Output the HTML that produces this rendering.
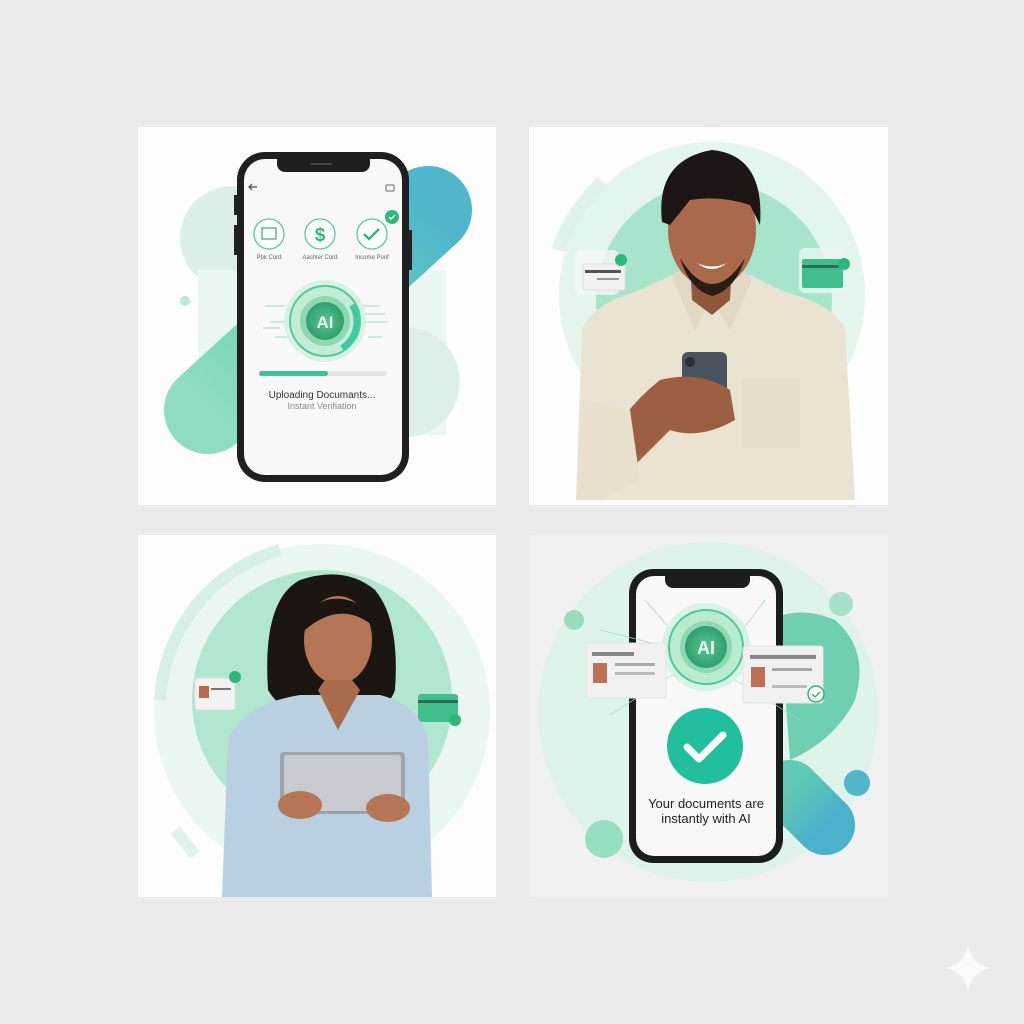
<!DOCTYPE html>
<html><head><meta charset="utf-8"><style>
html,body{margin:0;padding:0;background:#ebebeb;}
svg{display:block}
text{font-family:"Liberation Sans",sans-serif}
</style></head><body>
<svg width="1024" height="1024" viewBox="0 0 1024 1024" xmlns="http://www.w3.org/2000/svg">
<defs>
<linearGradient id="tg" x1="1" y1="0" x2="0" y2="1"><stop offset="0" stop-color="#4fb6cc"/><stop offset="0.5" stop-color="#6bd0b6"/><stop offset="1" stop-color="#8fddc0"/></linearGradient>
<linearGradient id="tg2" x1="0" y1="0" x2="1" y2="1"><stop offset="0" stop-color="#5ec9b4"/><stop offset="1" stop-color="#4ab2cc"/></linearGradient>
<radialGradient id="ai"><stop offset="0" stop-color="#5cc592"/><stop offset="1" stop-color="#2f9e6d"/></radialGradient>
<clipPath id="c1"><rect x="138" y="127" width="358" height="378"/></clipPath>
<clipPath id="c2"><rect x="529" y="127" width="359" height="378"/></clipPath>
<clipPath id="c3"><rect x="138" y="535" width="358" height="362"/></clipPath>
<clipPath id="c4"><rect x="529" y="535" width="359" height="362"/></clipPath>
</defs>
<rect width="1024" height="1024" fill="#ebebeb"/>

<!-- Panel 1 -->
<g clip-path="url(#c1)">
<rect x="138" y="127" width="358" height="378" fill="#fdfdfd"/>
<circle cx="232" cy="238" r="52" fill="#dcefe7"/>
<rect x="198" y="270" width="248" height="165" fill="#eaf6f0"/>
<circle cx="405" cy="382" r="55" fill="#deefe9"/>
<line x1="428" y1="210" x2="208" y2="410" stroke="url(#tg)" stroke-width="88" stroke-linecap="round"/>
<circle cx="185" cy="301" r="5" fill="#bde8d6"/>
<rect x="237" y="152" width="172" height="330" rx="28" fill="#1f1f1f"/>
<rect x="234" y="195" width="4" height="20" fill="#222"/><rect x="234" y="225" width="4" height="30" fill="#222"/><rect x="408" y="230" width="4" height="40" fill="#222"/>
<rect x="244" y="159" width="158" height="316" rx="21" fill="#f8f8f8"/>
<path d="M277 158h93v6a8 8 0 0 1-8 8h-77a8 8 0 0 1-8-8z" fill="#1f1f1f"/>
<rect x="310" y="163" width="22" height="2" rx="1" fill="#444"/>
<path d="M257 187h-8m3-3l-3 3 3 3" stroke="#444" stroke-width="1.2" fill="none"/>
<rect x="386" y="185" width="8" height="6" rx="1" stroke="#666" fill="none" stroke-width="1"/>
<circle cx="392" cy="217" r="7" fill="#2eb77b"/><path d="M389 217l2 2 4-4" stroke="#fff" stroke-width="1.4" fill="none"/>
<g fill="#fff" stroke="#4fcf98" stroke-width="1.3">
<circle cx="269" cy="234" r="15"/><circle cx="320" cy="234" r="15"/><circle cx="372" cy="234" r="15"/></g>
<rect x="262" y="228" width="14" height="11" fill="none" stroke="#3db585" stroke-width="1.3"/>
<text x="320" y="241" font-size="19" font-weight="bold" fill="#2eb77b" text-anchor="middle">$</text>
<path d="M364 234l5 5 10-10" stroke="#2eb77b" stroke-width="2.5" fill="none"/>
<g font-size="6" fill="#666" text-anchor="middle"><text x="269" y="259">Pbk Cord</text><text x="320" y="259">Aashler Cord</text><text x="372" y="259">Income Poof</text></g>
<g stroke="#9adcbf" stroke-width="1"><line x1="265" y1="306" x2="285" y2="306"/><line x1="270" y1="322" x2="292" y2="322"/><line x1="263" y1="328" x2="280" y2="328"/><line x1="275" y1="337" x2="290" y2="337"/><line x1="360" y1="306" x2="380" y2="306"/><line x1="362" y1="314" x2="385" y2="314"/><line x1="360" y1="322" x2="388" y2="322"/><line x1="368" y1="337" x2="382" y2="337"/></g>
<circle cx="325" cy="321" r="41" fill="#d8f3e6"/>
<circle cx="325" cy="321" r="35" fill="#c3ecd8" stroke="#55c99a" stroke-width="2"/>
<path d="M352 305a32 32 0 0 1 0 33a32 32 0 0 1-10 10" stroke="#3dc9a4" stroke-width="6" fill="none"/>
<circle cx="325" cy="321" r="25" fill="#8fd6b3"/>
<circle cx="325" cy="321" r="19" fill="url(#ai)"/>
<text x="325" y="328" font-size="17" font-weight="bold" fill="#eafaf1" text-anchor="middle">AI</text>
<rect x="259" y="371" width="128" height="5" rx="2.5" fill="#e4e4e4"/>
<rect x="259" y="371" width="69" height="5" rx="2.5" fill="#3dc39a"/>
<text x="322" y="398" font-size="10" fill="#333" text-anchor="middle">Uploading Documants...</text>
<text x="322" y="409" font-size="9" fill="#888" text-anchor="middle">Instant Verifiation</text>
</g>

<!-- Panel 2 -->
<g clip-path="url(#c2)">
<rect x="529" y="127" width="359" height="378" fill="#fdfdfd"/>
<circle cx="712" cy="295" r="153" fill="#e4f5ee"/>
<path d="M558 250a170 170 0 0 1 45-68" stroke="#e0f3eb" stroke-width="14" fill="none"/>
<circle cx="714" cy="300" r="118" fill="#a8e4cb"/>
<rect x="575" y="250" width="44" height="45" rx="6" fill="#f2f8f5" opacity="0.8"/>
<rect x="583" y="264" width="42" height="26" rx="2" fill="#f2f2f2" stroke="#ddd"/>
<rect x="585" y="270" width="36" height="3" fill="#555"/><rect x="597" y="278" width="22" height="2" fill="#999"/>
<circle cx="621" cy="260" r="6" fill="#2eb77b"/>
<rect x="799" y="248" width="46" height="45" rx="6" fill="#eaf6f0" opacity="0.8"/>
<rect x="802" y="259" width="41" height="29" rx="2" fill="#3ebf8c"/><rect x="802" y="265" width="41" height="3" fill="#2f6b55"/>
<circle cx="844" cy="264" r="6" fill="#2eb77b"/>
<!-- body -->
<path d="M576 500 L582 330 Q590 305 640 290 L672 275 L750 275 L785 292 Q835 305 845 330 L855 500 Z" fill="#ebe3d1"/>
<path d="M672 278 L695 330 L712 300 L730 330 L752 280 L745 272 L675 272Z" fill="#e2d8c4"/>
<rect x="742" y="378" width="58" height="70" fill="#e4dbc8"/>
<path d="M690 260 L732 260 L730 300 L712 315 L692 300Z" fill="#8f573c"/>
<ellipse cx="712" cy="230" rx="44" ry="58" fill="#a9694a"/>
<path d="M662 222 Q655 160 712 150 Q765 155 760 225 L750 205 Q720 195 690 200 L670 225Z" fill="#1c1714"/>
<path d="M680 258 Q712 310 745 258 Q735 290 712 296 Q690 290 680 258Z" fill="#2a1c16"/>
<path d="M697 263 Q712 275 727 263 Q712 270 697 263Z" fill="#fff"/>
<rect x="682" y="352" width="45" height="72" rx="6" fill="#4a5360"/>
<circle cx="690" cy="362" r="5" fill="#2a2f36"/>
<path d="M660 380 Q700 370 730 390 L735 420 Q700 440 670 430 L630 470 Q600 500 600 470 Q610 420 660 380Z" fill="#9c5f42"/>
<path d="M576 500 L582 400 L630 410 L640 480 L600 500Z" fill="#e8e0cd"/>
</g>

<!-- Panel 3 -->
<g clip-path="url(#c3)">
<rect x="138" y="535" width="358" height="362" fill="#fdfdfd"/>
<circle cx="322" cy="712" r="168" fill="#eaf7f1"/>
<path d="M160 700a165 165 0 0 1 120-150" stroke="#d7f0e5" stroke-width="12" fill="none"/>
<circle cx="322" cy="700" r="130" fill="#b2e7cf"/>
<path d="M175 830l20 25" stroke="#e0f3eb" stroke-width="12"/>
<rect x="195" y="678" width="40" height="32" rx="3" fill="#f2f2f2" stroke="#ddd"/><rect x="199" y="686" width="10" height="12" fill="#b86a4e"/><rect x="211" y="688" width="20" height="2" fill="#777"/>
<circle cx="235" cy="677" r="6" fill="#2eb77b"/>
<rect x="418" y="694" width="40" height="28" rx="3" fill="#3ebf8c"/><rect x="418" y="700" width="40" height="3" fill="#2f6b55"/>
<circle cx="455" cy="720" r="6" fill="#2eb77b"/>
<path d="M268 690 Q262 600 300 580 Q345 565 375 590 Q400 620 395 690 Q385 720 330 710 Q285 720 268 690Z" fill="#1c1613"/>
<ellipse cx="338" cy="640" rx="34" ry="44" fill="#b57656"/>
<path d="M305 615 Q330 585 370 610 L372 625 Q340 600 305 630Z" fill="#1c1613"/>
<path d="M222 897 L228 740 Q240 705 300 695 L380 695 Q420 705 428 740 L432 897Z" fill="#b9cfe2"/>
<path d="M318 690 L338 730 L360 690 L352 680 L325 680Z" fill="#aa6b4c"/>
<rect x="280" y="752" width="125" height="62" rx="4" fill="#9ea3a8"/>
<rect x="284" y="755" width="117" height="56" rx="3" fill="#c7cbcf"/>
<ellipse cx="300" cy="805" rx="22" ry="14" fill="#b57656"/>
<ellipse cx="388" cy="808" rx="22" ry="14" fill="#b57656"/>
</g>

<!-- Panel 4 -->
<g clip-path="url(#c4)">
<rect x="529" y="535" width="359" height="362" fill="#f1f1f1"/>
<circle cx="708" cy="712" r="170" fill="#def3e9"/>
<path d="M770 620 Q800 605 835 620 Q870 650 855 700 Q835 740 790 760 L780 620Z" fill="#6fcfb2"/>
<line x1="790" y1="790" x2="825" y2="825" stroke="url(#tg2)" stroke-width="60" stroke-linecap="round"/>
<circle cx="841" cy="604" r="12" fill="#a8e1ca"/>
<circle cx="574" cy="620" r="10" fill="#9bdcbd"/>
<circle cx="857" cy="783" r="13" fill="#52b5c9"/>
<circle cx="604" cy="839" r="19" fill="#97dfc0"/>
<rect x="629" y="569" width="154" height="294" rx="24" fill="#1d1d1d"/>
<rect x="636" y="576" width="140" height="280" rx="18" fill="#f8f8f8"/>
<path d="M665 575h85v5a8 8 0 0 1-8 8h-69a8 8 0 0 1-8-8z" fill="#1d1d1d"/>
<g stroke="#9adcbf" stroke-width="0.7" fill="none"><path d="M645 600L680 640M765 600L735 640M600 630L680 650M610 715L680 670M800 720L735 680"/></g>
<circle cx="706" cy="647" r="44" fill="#d3f1e3" opacity="0.9"/>
<circle cx="706" cy="647" r="37" fill="#b9ebd3" stroke="#4ec894" stroke-width="2"/>
<circle cx="706" cy="647" r="26" fill="#8fd8b4"/>
<circle cx="706" cy="647" r="21" fill="url(#ai)"/>
<text x="706" y="654" font-size="18" font-weight="bold" fill="#eafaf1" text-anchor="middle">AI</text>
<rect x="586" y="643" width="80" height="55" rx="3" fill="#f1f1f1" stroke="#e2e2e2"/>
<rect x="592" y="652" width="42" height="4" fill="#888"/><rect x="593" y="663" width="14" height="20" fill="#c07052"/><rect x="615" y="663" width="40" height="3" fill="#aaa"/><rect x="615" y="672" width="40" height="3" fill="#bbb"/>
<rect x="743" y="646" width="80" height="57" rx="3" fill="#f1f1f1" stroke="#e2e2e2"/>
<rect x="750" y="655" width="66" height="4" fill="#888"/><rect x="751" y="667" width="14" height="20" fill="#c07052"/><rect x="772" y="668" width="40" height="3" fill="#aaa"/><rect x="772" y="685" width="35" height="3" fill="#bbb"/>
<circle cx="816" cy="694" r="8" fill="#fff" stroke="#2eb77b" stroke-width="1.5"/><path d="M812 694l3 3 5-5" stroke="#2eb77b" stroke-width="1.5" fill="none"/>
<circle cx="705" cy="746" r="38" fill="#22bf9f"/>
<path d="M687 747l12 12 24-24" stroke="#fff" stroke-width="7" fill="none" stroke-linecap="round" stroke-linejoin="round"/>
<text x="706" y="808" font-size="13" fill="#222" text-anchor="middle">Your documents are</text>
<text x="706" y="823" font-size="13" fill="#222" text-anchor="middle">instantly with AI</text>
</g>

<path d="M968 945 Q971 965 992 968 Q971 971 968 992 Q965 971 944 968 Q965 965 968 945Z" fill="#fafafa"/>
</svg>
</body></html>
